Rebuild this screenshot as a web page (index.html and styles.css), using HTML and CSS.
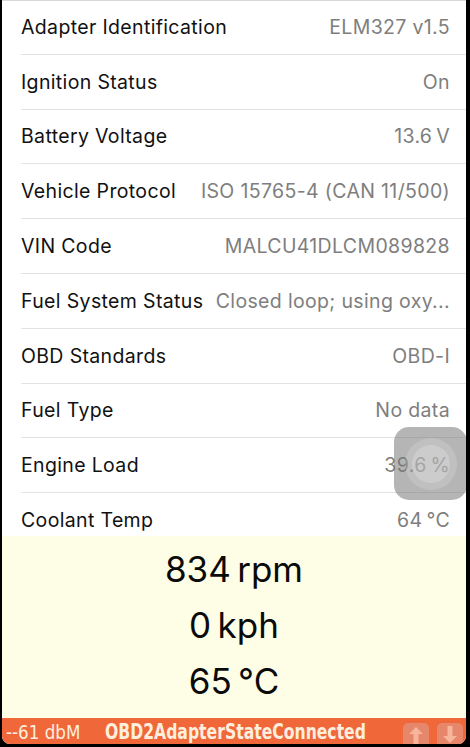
FILE: index.html
```html
<!DOCTYPE html>
<html>
<head>
<meta charset="utf-8">
<link rel="stylesheet" href="styles.css">
</head>
<body>
<div class="frame">
  <div class="screen">
    <div class="list">
      <div class="row"><span class="label">Adapter Identification</span><span class="value">ELM327 v1.5</span></div>
      <div class="row"><span class="label">Ignition Status</span><span class="value">On</span></div>
      <div class="row"><span class="label">Battery Voltage</span><span class="value">13.6&#8201;V</span></div>
      <div class="row"><span class="label">Vehicle Protocol</span><span class="value">ISO 15765-4 (CAN 11/500)</span></div>
      <div class="row"><span class="label">VIN Code</span><span class="value">MALCU41DLCM089828</span></div>
      <div class="row"><span class="label">Fuel System Status</span><span class="value">Closed loop; using oxy...</span></div>
      <div class="row"><span class="label">OBD Standards</span><span class="value">OBD-I</span></div>
      <div class="row"><span class="label">Fuel Type</span><span class="value">No data</span></div>
      <div class="row"><span class="label">Engine Load</span><span class="value">39.6&#8201;%</span></div>
      <div class="row"><span class="label">Coolant Temp</span><span class="value">64&#8201;°C</span></div>
    </div>
    <div class="gauges">
      <div class="gauge">834&#8201;rpm</div>
      <div class="gauge">0&#8201;kph</div>
      <div class="gauge">65&#8201;°C</div>
    </div>
    <div class="status">
      <span class="rssi"><span class="narrow">--61 dbM</span></span>
      <span class="state"><span class="narrow">OBD2AdapterStateConnected</span></span>
      <span class="btns">
        <span class="btn"><svg width="16" height="18" viewBox="0 0 16 18"><path d="M8 1 L15 8 L10.5 8 L10.5 18 L5.5 18 L5.5 8 L1 8 Z" fill="#f7b59b"/></svg></span>
        <span class="btn"><svg width="16" height="18" viewBox="0 0 16 18"><path d="M8 17 L15 10 L10.5 10 L10.5 0 L5.5 0 L5.5 10 L1 10 Z" fill="#f7b59b"/></svg></span>
      </span>
    </div>
    <div class="assist"><div class="ring"><div class="dot"></div></div></div>
  </div>
</div>
</body>
</html>
```
FILE: styles.css
```css
html, body {
  margin: 0;
  padding: 0;
  background: #000;
}
.frame {
  width: 470px;
  height: 747px;
  background: #000;
  padding: 0 4px 3px 2px;
  box-sizing: border-box;
}
.screen {
  position: relative;
  height: 100%;
  display: flex;
  flex-direction: column;
  background: #fff;
  border-radius: 0 0 8px 8px;
  overflow: hidden;
  border-top: 1px solid #d8d8d8;
  box-sizing: border-box;
}
.list {
  height: 535px;
  overflow: hidden;
  flex: none;
}
.row {
  height: 54.8px;
  box-sizing: border-box;
  margin-left: 19px;
  padding-right: 16px;
  display: flex;
  align-items: center;
  justify-content: space-between;
  border-bottom: 1px solid #e2e2e2;
  font-family: Inter, "Noto Sans", sans-serif;
  font-size: 19.5px;
  letter-spacing: 0.35px;
}
.row:first-child { height: 53.8px; }
.label {
  color: #111;
  white-space: nowrap;
}
.value {
  color: #7e7e7e;
  white-space: nowrap;
  margin-left: 12px;
}
.gauges {
  flex: 1;
  background: #fefde6;
  display: flex;
  flex-direction: column;
  align-items: center;
  padding-top: 10px;
  font-family: Inter, "Noto Sans", sans-serif;
  font-size: 35px;
  color: #0a0a0a;
}
.gauge {
  height: 56px;
  line-height: 46px;
}
.status {
  height: 26px;
  flex: none;
  background: #f0683a;
  display: flex;
  align-items: flex-end;
  font-family: "DejaVu Sans Condensed", "DejaVu Sans", sans-serif;
  font-stretch: condensed;
  color: #fdeedd;
  line-height: 22px;
  white-space: nowrap;
}
.rssi {
  margin-left: 4px;
  width: 99px;
  flex: none;
  font-size: 20px;
  padding-bottom: 1.5px;
}
.rssi .narrow {
  transform: scaleX(0.93);
}
.state {
  font-weight: bold;
  font-size: 22px;
  flex: 1;
  min-width: 0;
  padding-bottom: 1.5px;
}
.state .narrow {
  transform: scaleX(0.79);
}
.narrow {
  display: inline-block;
  transform-origin: left bottom;
}
.btns {
  display: flex;
  gap: 8px;
  margin-right: 3px;
  flex: none;
}
.btn {
  width: 26px;
  height: 21px;
  border-radius: 5px 5px 0 0;
  background: #e6866a;
  display: flex;
  justify-content: center;
  align-items: flex-end;
}
.assist {
  position: absolute;
  left: 392px;
  top: 426px;
  width: 73px;
  height: 73px;
  border-radius: 15px;
  background: rgba(120, 120, 120, 0.55);
  display: flex;
  align-items: center;
  justify-content: center;
}
.ring {
  width: 52px;
  height: 52px;
  border-radius: 50%;
  background: rgba(255, 255, 255, 0.15);
  display: flex;
  align-items: center;
  justify-content: center;
}
.dot {
  width: 38px;
  height: 38px;
  border-radius: 50%;
  background: rgba(255, 255, 255, 0.2);
}
```
